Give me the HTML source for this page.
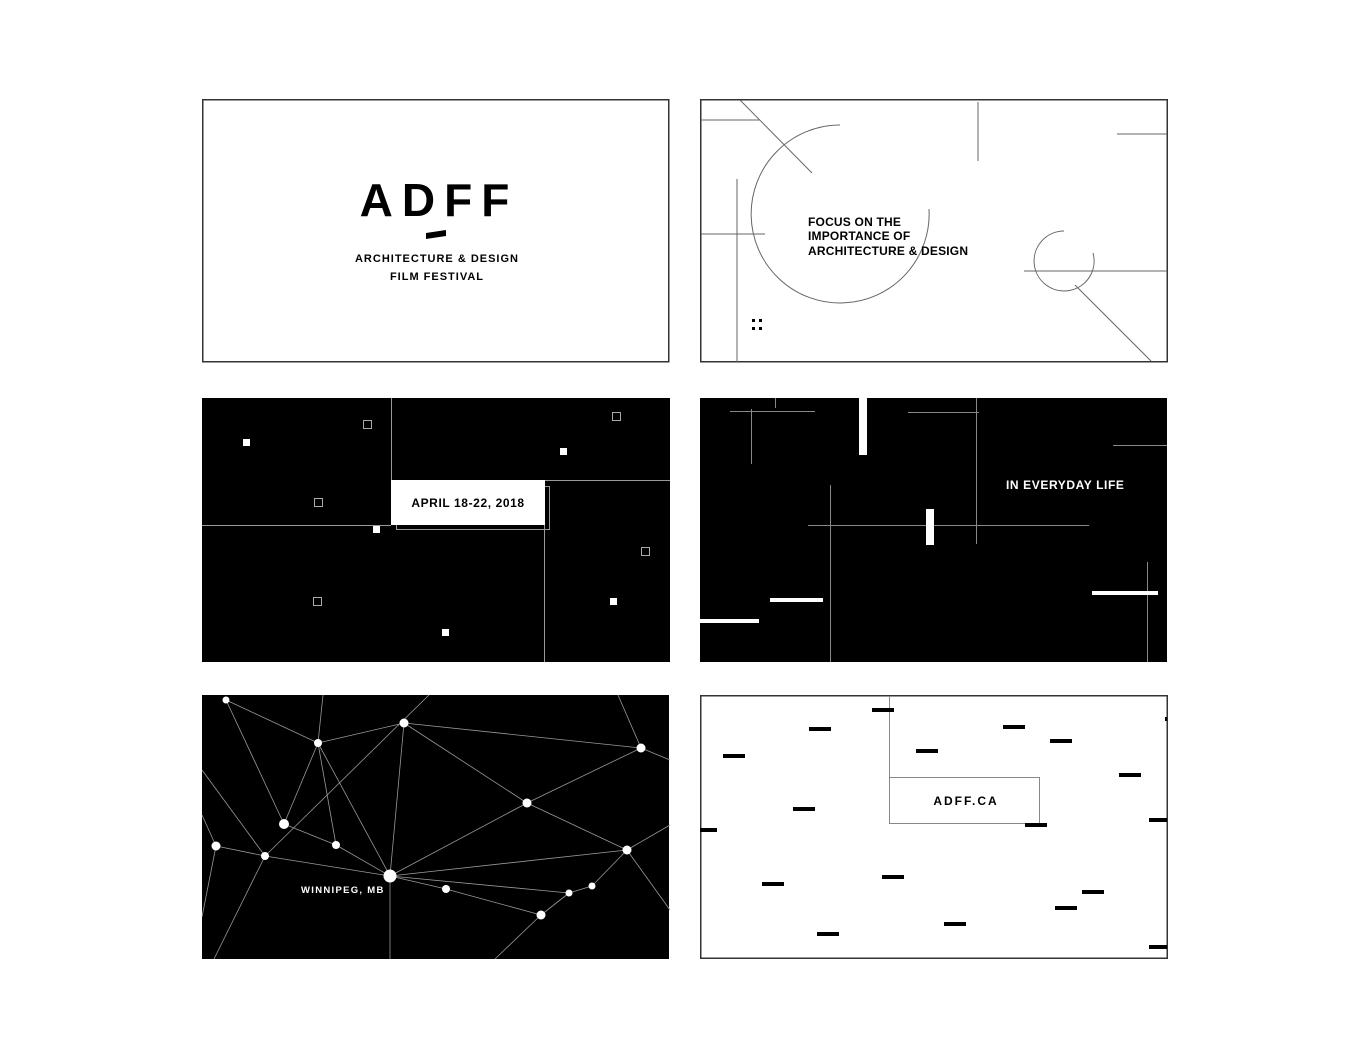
<!DOCTYPE html>
<html><head><meta charset="utf-8"><style>
html,body{margin:0;padding:0;background:#fff;}
svg{display:block;}
text{font-family:"Liberation Sans",sans-serif;font-weight:bold;}
</style></head><body>
<svg width="1369" height="1058" viewBox="0 0 1369 1058" xmlns="http://www.w3.org/2000/svg">
<rect width="1369" height="1058" fill="#fff"/>

<!-- Panel 1 -->
<rect x="202.75" y="99.75" width="466" height="262" fill="#fff" stroke="#333" stroke-width="1.5"/>
<text x="439" y="216" font-size="46" text-anchor="middle" letter-spacing="9" fill="#000">ADFF</text>
<polygon points="426,233 446,230 446,236 426,239" fill="#000"/>
<text x="437" y="262" font-size="11" text-anchor="middle" letter-spacing="1" fill="#000">ARCHITECTURE &amp; DESIGN</text>
<text x="437" y="280" font-size="11" text-anchor="middle" letter-spacing="1" fill="#000">FILM FESTIVAL</text>

<!-- Panel 2 -->
<g transform="translate(700,99)">
<rect x="0.75" y="0.75" width="466.5" height="262" fill="#fff" stroke="#333" stroke-width="1.5"/>
<g stroke="#666" stroke-width="1" fill="none">
<line x1="1" y1="21" x2="60" y2="21"/>
<line x1="40" y1="1" x2="112" y2="74"/>
<path d="M140 26 A89 89 0 1 0 229 110"/>
<line x1="37" y1="80" x2="37" y2="263"/>
<line x1="1" y1="135" x2="65" y2="135"/>
<line x1="278" y1="3" x2="278" y2="62"/>
<line x1="417" y1="35" x2="467" y2="35"/>
<path d="M364 132 A30 30 0 1 0 393 154"/>
<line x1="324" y1="172" x2="467" y2="172"/>
<line x1="375" y1="186" x2="451" y2="262"/>
</g>
<g fill="#000"><rect x="52" y="220" width="3" height="3"/><rect x="59" y="220" width="3" height="3"/><rect x="52" y="228" width="3" height="3"/><rect x="59" y="228" width="3" height="3"/></g>
<text x="108" y="127" font-size="12" letter-spacing="0.2" fill="#000">FOCUS ON THE</text>
<text x="108" y="141" font-size="12" letter-spacing="0.2" fill="#000">IMPORTANCE OF</text>
<text x="108" y="156" font-size="12" letter-spacing="0.2" fill="#000">ARCHITECTURE &amp; DESIGN</text>
</g>

<!-- Panel 3 -->
<g transform="translate(202,398)">
<rect x="0" y="0" width="468" height="264" fill="#000"/>
<g stroke="#999" stroke-width="1" fill="none">
<line x1="189.5" y1="0" x2="189.5" y2="127"/>
<line x1="0" y1="127.5" x2="189" y2="127.5"/>
<line x1="343" y1="82.5" x2="468" y2="82.5"/>
<line x1="342.5" y1="82" x2="342.5" y2="264"/>
<rect x="194.5" y="88.5" width="153" height="43"/>
</g>
<rect x="189" y="82" width="154" height="45" fill="#fff"/>
<text x="266" y="109" font-size="12" text-anchor="middle" letter-spacing="0.6" fill="#000">APRIL 18-22, 2018</text>
<g fill="#fff">
<rect x="41" y="41" width="7" height="7"/><rect x="358" y="50" width="7" height="7"/><rect x="171" y="128" width="7" height="7"/><rect x="240" y="231" width="7" height="7"/><rect x="408" y="200" width="7" height="7"/>
</g>
<g stroke="#aaa" fill="none">
<rect x="161.5" y="22.5" width="8" height="8"/><rect x="410.5" y="14.5" width="8" height="8"/><rect x="112.5" y="100.5" width="8" height="8"/><rect x="439.5" y="149.5" width="8" height="8"/><rect x="111.5" y="199.5" width="8" height="8"/>
</g>
</g>

<!-- Panel 4 -->
<g transform="translate(700,398)">
<rect x="0" y="0" width="467" height="264" fill="#000"/>
<g stroke="#888" stroke-width="1" fill="none">
<line x1="75.5" y1="0" x2="75.5" y2="10"/>
<line x1="30" y1="13.5" x2="115" y2="13.5"/>
<line x1="51.5" y1="11" x2="51.5" y2="66"/>
<line x1="208" y1="14.5" x2="279" y2="14.5"/>
<line x1="276.5" y1="0" x2="276.5" y2="146"/>
<line x1="413" y1="47.5" x2="467" y2="47.5"/>
<line x1="130.5" y1="87" x2="130.5" y2="264"/>
<line x1="108" y1="127.5" x2="389" y2="127.5"/>
<line x1="447.5" y1="164" x2="447.5" y2="264"/>
</g>
<g fill="#fff">
<rect x="159" y="0" width="8" height="57"/>
<rect x="226" y="111" width="8" height="36"/>
<rect x="70" y="200" width="53" height="4"/>
<rect x="0" y="221" width="59" height="4"/>
<rect x="392" y="193" width="66" height="4"/>
</g>
<text x="306" y="91" font-size="12" letter-spacing="0.6" fill="#fff">IN EVERYDAY LIFE</text>
</g>

<!-- Panel 5 -->
<g transform="translate(202,695)">
<rect x="0" y="0" width="467" height="264" fill="#000"/>
<g stroke="#999" stroke-width="0.8" fill="none">
<line x1="24" y1="5" x2="116" y2="48"/>
<line x1="24" y1="5" x2="82" y2="129"/>
<line x1="116" y1="48" x2="202" y2="28"/>
<line x1="116" y1="48" x2="121" y2="0"/>
<line x1="116" y1="48" x2="82" y2="129"/>
<line x1="116" y1="48" x2="134" y2="150"/>
<line x1="116" y1="48" x2="188" y2="181"/>
<line x1="202" y1="28" x2="439" y2="53"/>
<line x1="202" y1="28" x2="188" y2="181"/>
<line x1="202" y1="28" x2="325" y2="108"/>
<line x1="63" y1="161" x2="227" y2="0"/>
<line x1="82" y1="129" x2="134" y2="150"/>
<line x1="134" y1="150" x2="188" y2="181"/>
<line x1="63" y1="161" x2="188" y2="181"/>
<line x1="14" y1="151" x2="63" y2="161"/>
<line x1="14" y1="151" x2="0" y2="120"/>
<line x1="63" y1="161" x2="0" y2="75"/>
<line x1="14" y1="151" x2="0" y2="222"/>
<line x1="63" y1="161" x2="12" y2="264"/>
<line x1="188" y1="181" x2="244" y2="194"/>
<line x1="244" y1="194" x2="339" y2="220"/>
<line x1="188" y1="181" x2="325" y2="108"/>
<line x1="188" y1="181" x2="425" y2="155"/>
<line x1="188" y1="181" x2="367" y2="198"/>
<line x1="188" y1="181" x2="188" y2="264"/>
<line x1="339" y1="220" x2="367" y2="198"/>
<line x1="367" y1="198" x2="390" y2="191"/>
<line x1="390" y1="191" x2="425" y2="155"/>
<line x1="339" y1="220" x2="293" y2="264"/>
<line x1="325" y1="108" x2="439" y2="53"/>
<line x1="325" y1="108" x2="425" y2="155"/>
<line x1="425" y1="155" x2="468" y2="130"/>
<line x1="425" y1="155" x2="468" y2="215"/>
<line x1="439" y1="53" x2="468" y2="65"/>
<line x1="439" y1="53" x2="416" y2="0"/>
</g>
<g fill="#fff">
<circle cx="24" cy="5" r="3.5"/><circle cx="116" cy="48" r="4"/><circle cx="202" cy="28" r="4.5"/><circle cx="439" cy="53" r="4.5"/><circle cx="325" cy="108" r="4.5"/><circle cx="82" cy="129" r="5"/><circle cx="14" cy="151" r="4.5"/><circle cx="63" cy="161" r="4"/><circle cx="134" cy="150" r="4"/><circle cx="188" cy="181" r="6.5"/><circle cx="244" cy="194" r="4"/><circle cx="339" cy="220" r="4.5"/><circle cx="367" cy="198" r="3.5"/><circle cx="390" cy="191" r="3.5"/><circle cx="425" cy="155" r="4.5"/>
</g>
<text x="99" y="198" font-size="9.5" letter-spacing="1.3" fill="#fff">WINNIPEG, MB</text>
</g>

<!-- Panel 6 -->
<g transform="translate(700,695)">
<rect x="0.75" y="0.75" width="466.5" height="262.5" fill="#fff" stroke="#333" stroke-width="1.5"/>
<g stroke="#888" stroke-width="1" fill="none">
<line x1="189.5" y1="1" x2="189.5" y2="82"/>
<rect x="189.5" y="82.5" width="150" height="46"/>
</g>
<text x="266" y="110" font-size="12" text-anchor="middle" letter-spacing="2" fill="#000">ADFF.CA</text>
<g fill="#000">
<rect x="172" y="13" width="22" height="4"/>
<rect x="109" y="32" width="22" height="4"/>
<rect x="23" y="59" width="22" height="4"/>
<rect x="216" y="54" width="22" height="4"/>
<rect x="303" y="30" width="22" height="4"/>
<rect x="350" y="44" width="22" height="4"/>
<rect x="419" y="78" width="22" height="4"/>
<rect x="93" y="112" width="22" height="4"/>
<rect x="0" y="133" width="17" height="4"/>
<rect x="325" y="128" width="22" height="4"/>
<rect x="449" y="123" width="18" height="4"/>
<rect x="62" y="187" width="22" height="4"/>
<rect x="182" y="180" width="22" height="4"/>
<rect x="382" y="195" width="22" height="4"/>
<rect x="355" y="211" width="22" height="4"/>
<rect x="244" y="227" width="22" height="4"/>
<rect x="117" y="237" width="22" height="4"/>
<rect x="449" y="250" width="18" height="4"/>
<rect x="465" y="22" width="2" height="4"/>
</g>
</g>
</svg>
</body></html>
